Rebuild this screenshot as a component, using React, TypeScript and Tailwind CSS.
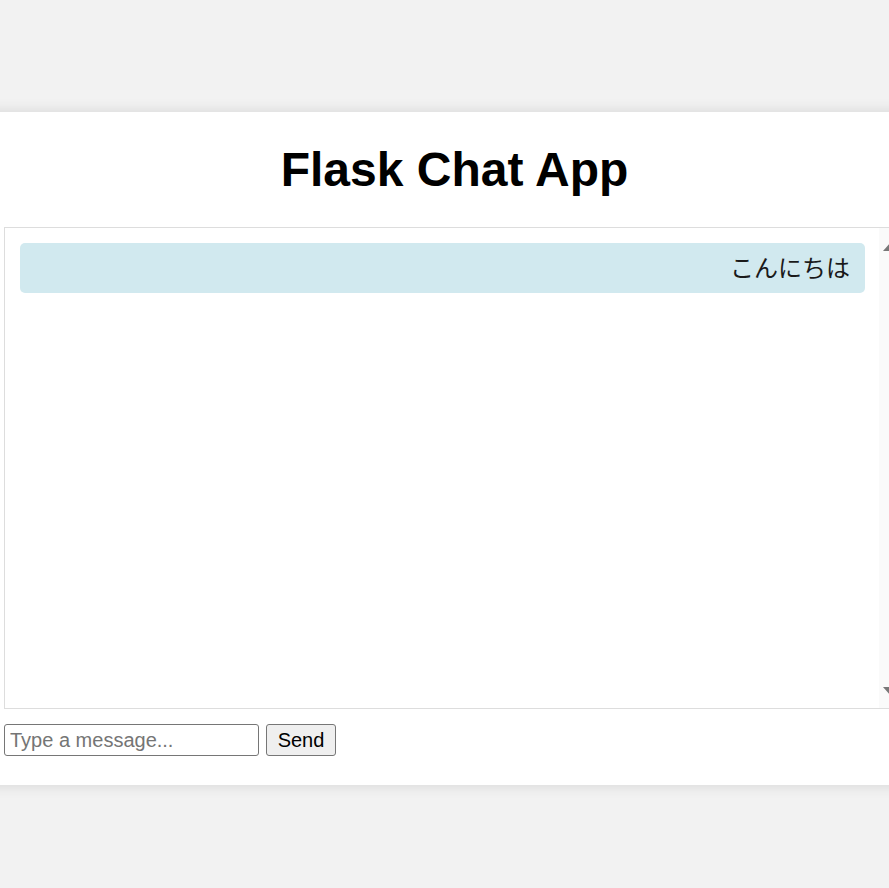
import React from 'react';

function ScrollArrow({ down }: { down?: boolean }) {
    return (
        <svg width="14" height="8" viewBox="0 0 14 8" className="ml-[4px]">
            {down ? <polygon points="0,0 14,0 7,8" fill="#787878" /> : <polygon points="0,8 14,8 7,0" fill="#787878" />}
        </svg>
    );
}

function App() {
    const messages = ['こんにちは'];

    return (
        <div className="min-h-screen w-full overflow-hidden bg-[#f2f2f2] pt-[112px] font-['Liberation_Sans','Noto_Sans_CJK_JP',Arial,sans-serif]">
            <div className="ml-[-16px] w-[941px] bg-white px-[20px] pt-[30px] pb-[29px] shadow-[0_0_14px_rgba(0,0,0,0.12)]">
                <h1 className="text-center text-[48px] leading-[55px] font-bold text-black">Flask Chat App</h1>

                {/* message list with a fake windows scrollbar */}
                <div className="mt-[30px] flex h-[482px] border border-[#dddddd]">
                    <div className="flex-1 py-[15px] pl-[15px] pr-[14px]">
                        {messages.map((m, i) => (
                            <div key={i} className="flex h-[50px] items-center justify-end rounded-[5px] bg-[#d1e9ef] pr-[15px] pb-[3px] text-[24px] text-[#1a1a1a] font-['Noto_Sans_CJK_JP',sans-serif]">
                                {m}
                            </div>
                        ))}
                    </div>
                    <div className="flex w-[25px] flex-col justify-between bg-[#fafafa] pt-[15px] pb-[13px]">
                        <ScrollArrow />
                        <ScrollArrow down />
                    </div>
                </div>

                <div className="mt-[15px] flex items-center gap-[7px]">
                    <input
                        type="text"
                        placeholder="Type a message..."
                        className="h-[32px] w-[255px] rounded-[3px] border border-[#767676] px-[5px] text-[20px] text-black placeholder:text-[#757575] outline-none"
                    />
                    <button className="h-[32px] w-[70px] rounded-[3px] border border-[#767676] bg-[#efefef] text-[20px] text-black">
                        Send
                    </button>
                </div>
            </div>
        </div>
    );
}

export default App;
